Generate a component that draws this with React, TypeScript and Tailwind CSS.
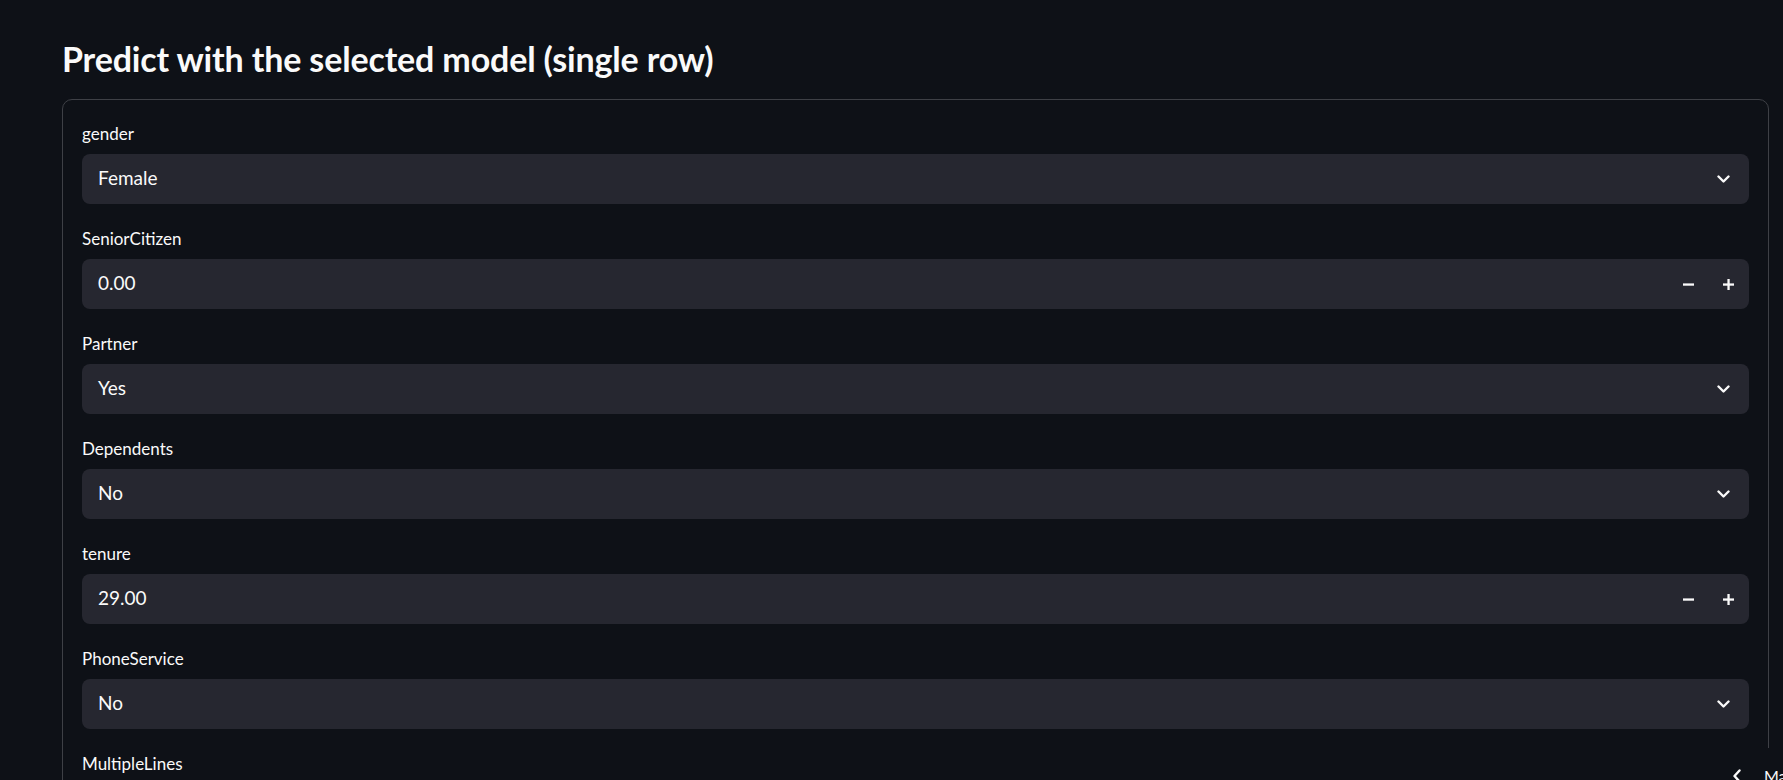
import React from "react";

type Field = {
  label: string;
  value: string;
  kind: "select" | "number";
};

const fields: Field[] = [
  { label: "gender", value: "Female", kind: "select" },
  { label: "SeniorCitizen", value: "0.00", kind: "number" },
  { label: "Partner", value: "Yes", kind: "select" },
  { label: "Dependents", value: "No", kind: "select" },
  { label: "tenure", value: "29.00", kind: "number" },
  { label: "PhoneService", value: "No", kind: "select" },
  { label: "MultipleLines", value: "No phone service", kind: "select" },
];

function Chevron() {
  return (
    <svg width="13" height="9" viewBox="0 0 13 9" fill="none">
      <path d="M1.5 1.5 L6.5 6.5 L11.5 1.5" stroke="#fafafa" strokeWidth="2.4" strokeLinecap="round" strokeLinejoin="round" />
    </svg>
  );
}

function Minus() {
  return (
    <svg width="11" height="11" viewBox="0 0 11 11">
      <rect x="0" y="4.4" width="11" height="2.3" fill="#fafafa" />
    </svg>
  );
}

function Plus() {
  return (
    <svg width="11" height="11" viewBox="0 0 11 11">
      <rect x="0" y="4.4" width="11" height="2.3" fill="#fafafa" />
      <rect x="4.4" y="0" width="2.3" height="11" fill="#fafafa" />
    </svg>
  );
}

function FieldRow({ field }: { field: Field }) {
  return (
    <div className="flex flex-col">
      <label className="text-[17px] leading-[22px] text-[#fafafa] mb-[9px]">{field.label}</label>
      <div className="h-[50px] rounded-[8px] bg-[#262730] flex items-center">
        <span className="flex-1 pl-[16px] text-[19px] text-[#fafafa] -mt-[1px]">{field.value}</span>
        {field.kind === "select" ? (
          <span className="pr-[19px] flex items-center">
            <Chevron />
          </span>
        ) : (
          <div className="flex h-full pr-[1px]">
            <button className="w-[40px] h-full flex items-center justify-center">
              <Minus />
            </button>
            <button className="w-[40px] h-full flex items-center justify-center">
              <Plus />
            </button>
          </div>
        )}
      </div>
    </div>
  );
}

export default function App() {
  return (
    <div className="h-screen w-screen overflow-hidden bg-[#0e1117] font-['Lato',sans-serif] text-[#fafafa] relative">
      <div className="pl-[62px] pt-[37px] w-[1769px]">
        <h2 className="text-[34px] leading-[44px] font-bold mb-[18px] tracking-[-0.15px]">
          Predict with the selected model (single row)
        </h2>
        <div className="border border-[#3e4046] rounded-[10px] px-[19px] pt-[23px] pb-[20px] flex flex-col gap-[24px]">
          {fields.map((f) => (
            <FieldRow key={f.label} field={f} />
          ))}
        </div>
      </div>
      <div className="absolute left-[1713px] top-[748px] h-[32px] w-[300px] bg-[#0e1117] flex items-start pt-[20px]">
        <span className="ml-[20px] mr-[23px] mt-[1px]">
          <svg width="8" height="14" viewBox="0 0 8 14" fill="none">
            <path d="M6.5 1.5 L1.5 7 L6.5 12.5" stroke="#fafafa" strokeWidth="2.4" strokeLinecap="round" strokeLinejoin="round" />
          </svg>
        </span>
        <span className="text-[16px] leading-[16px] whitespace-nowrap">Manage app</span>
      </div>
    </div>
  );
}
